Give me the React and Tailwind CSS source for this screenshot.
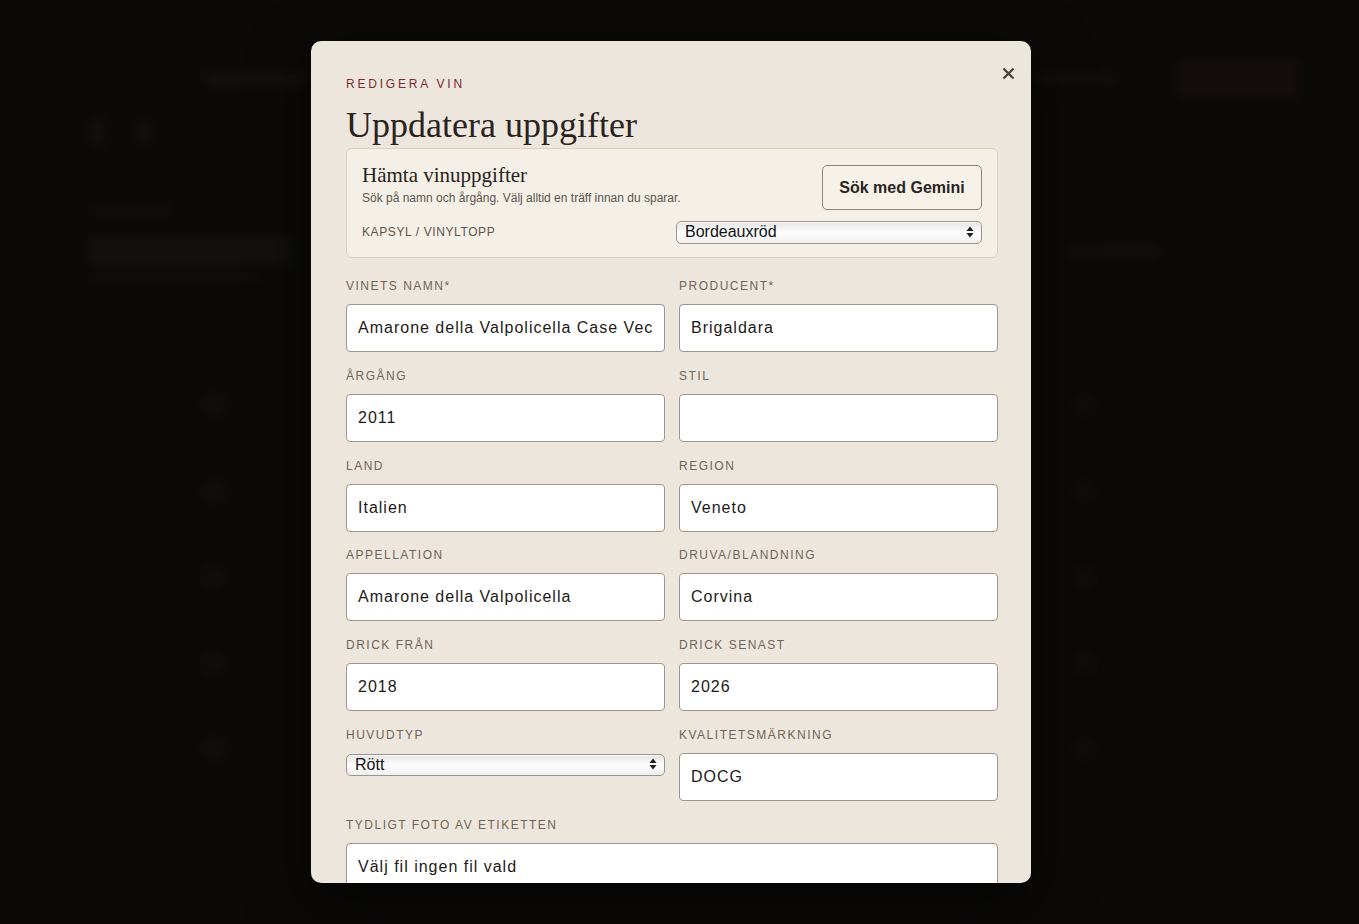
import React from "react";

const sans = { fontFamily: '"Liberation Sans", Arial, sans-serif' };
const serif = { fontFamily: '"Liberation Serif", "Times New Roman", serif' };

function Label({ children }) {
  return (
    <div className="h-4 mb-[10px] text-[12px] leading-4 tracking-[1.5px] uppercase text-[#6f6558]">
      {children}
    </div>
  );
}

function TextField({ label, value }) {
  return (
    <div className="flex flex-col">
      <Label>{label}</Label>
      <input
        readOnly
        value={value}
        className="h-12 w-full rounded-[4px] border border-[#a0968a] bg-white px-[11px] text-[16px] tracking-[1px] text-[#1d1a17] outline-none"
      />
    </div>
  );
}

function Arrows() {
  return (
    <svg width="8" height="12" viewBox="0 0 8 12" className="pointer-events-none absolute right-[8px] top-1/2 -translate-y-1/2">
      <path d="M4 0.5 L7.5 5 L0.5 5 Z" fill="#1e1e1e" />
      <path d="M4 11.5 L7.5 7 L0.5 7 Z" fill="#1e1e1e" />
    </svg>
  );
}

function NativeSelect({ value, className }) {
  return (
    <div className={"relative " + className}>
      <select
        value={value}
        onChange={() => {}}
        className="h-full w-full appearance-none rounded-[5px] border border-[#9c948a] bg-gradient-to-b from-[#e4e4e4] via-[#fdfdfd] to-[#f1f1f1] pl-[8px] pr-6 text-[16px] leading-5 text-[#111] shadow-[inset_0_1px_0_rgba(255,255,255,0.8)] outline-none"
      >
        <option>{value}</option>
      </select>
      <Arrows />
    </div>
  );
}

// Dimmed cellar page that sits behind the dialog
function BackgroundPage() {
  return (
    <div className="h-[924px] w-full overflow-hidden bg-[#0b0a09] blur-[4px]">
      <div className="flex items-center pl-[205px] pr-[60px] pt-[60px]">
        <div className="h-[14px] w-[100px] rounded bg-[#121110]" />
        <div className="ml-auto mr-[60px] h-[12px] w-[80px] rounded bg-[#100f0e]" />
        <div className="h-[38px] w-[122px] rounded-md bg-[#150c0d]" />
      </div>
      <div className="flex gap-[30px] px-[90px] pt-[20px]">
        <div className="h-[28px] w-[16px] rounded bg-[#100f0e]" />
        <div className="h-[28px] w-[16px] rounded bg-[#100f0e]" />
      </div>
      <div className="px-[90px] pt-[60px]">
        <div className="h-[8px] w-[80px] rounded bg-[#100f0e]" />
        <div className="mt-[22px] flex items-center">
          <div className="h-[30px] w-[200px] rounded bg-[#121110]" />
          <div className="ml-auto mr-[50px] h-[20px] w-[20px] rounded-full bg-[#100f0e]" />
          <div className="mr-[110px] h-[14px] w-[90px] rounded bg-[#100f0e]" />
        </div>
        <div className="mt-[8px] h-[8px] w-[170px] rounded bg-[#0f0e0d]" />
      </div>
      <div className="mx-[90px] mt-[70px] flex flex-col gap-[60px] border-x border-[#110b0b] px-[110px] py-[40px]">
        {[0, 1, 2, 3, 4].map((i) => (
          <div key={i} className="flex items-center">
            <div className="h-[26px] w-[26px] rounded-full bg-[#120c0c]" />
            <div className="ml-auto mr-[60px] h-[26px] w-[26px] rounded-full bg-[#110b0b]" />
          </div>
        ))}
      </div>
    </div>
  );
}

export default function App() {
  const fields = [
    ["Vinets namn*", "Amarone della Valpolicella Case Vecchie"],
    ["Producent*", "Brigaldara"],
    ["Årgång", "2011"],
    ["Stil", ""],
    ["Land", "Italien"],
    ["Region", "Veneto"],
    ["Appellation", "Amarone della Valpolicella"],
    ["Druva/blandning", "Corvina"],
    ["Drick från", "2018"],
    ["Drick senast", "2026"],
  ];

  return (
    <div className="relative h-[924px] w-full overflow-hidden bg-[#0b0a09]" style={sans}>
      <BackgroundPage />

      {/* dialog layer */}
      <div className="absolute inset-0 flex items-start justify-center pr-[17px] pt-[41px]">
        <div className="relative h-[842px] w-[720px] overflow-hidden rounded-[10px] bg-[#ede6dc] pl-[35px] pr-[33px] pt-[35px] shadow-[0_20px_60px_rgba(0,0,0,0.6)]">
          <button className="absolute right-[17px] top-[26px] flex h-[12px] w-[12px] items-center justify-center">
            <svg width="11" height="11" viewBox="0 0 11 11">
              <path d="M1.2 1.2 L9.8 9.8 M9.8 1.2 L1.2 9.8" stroke="#4a423a" strokeWidth="2.3" strokeLinecap="round" />
            </svg>
          </button>

          <div className="h-4 text-[12px] leading-4 tracking-[2.8px] text-[#7c2b33]">REDIGERA VIN</div>
          <h2 className="mb-[1px] mt-[11px] text-[36px] leading-[44px] text-[#2a221c]" style={serif}>
            Uppdatera uppgifter
          </h2>

          {/* lookup panel */}
          <div className="rounded-[6px] border border-[#dad0c1] bg-[#f5f0e7] px-[15px] pb-[14px] pt-[13px]">
            <div className="flex items-start justify-between">
              <div>
                <div className="text-[21px] leading-[26px] text-[#2a221c]" style={serif}>
                  Hämta vinuppgifter
                </div>
                <div className="mt-[2px] text-[12px] leading-4 text-[#5c544b]">
                  Sök på namn och årgång. Välj alltid en träff innan du sparar.
                </div>
              </div>
              <button className="mt-[3px] h-[45px] w-[160px] rounded-[5px] border border-[#8f8576] bg-[#f6f1e9] text-[16px] font-bold text-[#2a2520]">
                Sök med Gemini
              </button>
            </div>
            <div className="mt-[10px] flex items-center justify-between">
              <div className="text-[12px] tracking-[0.6px] text-[#5e554a]">KAPSYL / VINYLTOPP</div>
              <NativeSelect value="Bordeauxröd" className="h-[23px] w-[306px]" />
            </div>
          </div>

          {/* wine fields */}
          <div className="mt-[20px] grid grid-cols-2 gap-x-[14px] gap-y-[15.8px]">
            {fields.map(([label, value]) => (
              <TextField key={label} label={label} value={value} />
            ))}
            <div className="flex flex-col">
              <Label>Huvudtyp</Label>
              <NativeSelect value="Rött" className="h-[22px] w-full" />
            </div>
            <TextField label="Kvalitetsmärkning" value="DOCG" />
            <div className="col-span-2 flex flex-col">
              <Label>Tydligt foto av etiketten</Label>
              <div className="flex h-12 w-full items-center rounded-[4px] border border-[#a0968a] bg-white px-[11px] text-[16px] tracking-[1px] text-[#1d1a17]">
                Välj fil ingen fil vald
              </div>
            </div>
            <div className="col-span-2 h-[60px]" />
          </div>
        </div>
      </div>
    </div>
  );
}
